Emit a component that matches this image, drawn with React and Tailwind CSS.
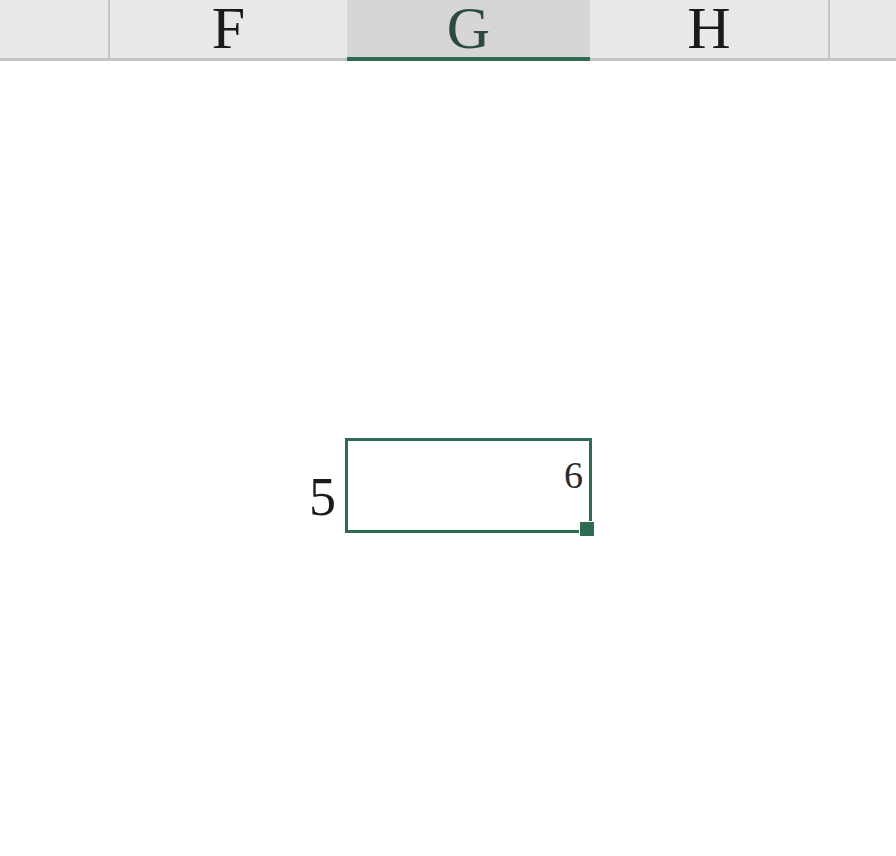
export default function App() {
  const serif = { fontFamily: '"Liberation Serif", "Times New Roman", serif' };
  return (
    <div className="w-[896px] h-[856px] bg-white overflow-hidden" style={serif}>
      <div className="flex h-[61px] text-[60px] leading-[56px] text-[#1a1a1a]">
        <div className="w-[108px] shrink-0 bg-[#e8e8e8] border-b-[3px] border-[#c4c4c4]" />
        <div className="w-[239px] shrink-0 bg-[#e8e8e8] border-l-[2px] border-b-[3px] border-[#c4c4c4] text-center">F</div>
        <div className="w-[243px] shrink-0 bg-[#d6d6d6] border-b-[4px] border-[#2f6b50] text-center text-[#2e4a3e]">G</div>
        <div className="w-[238px] shrink-0 bg-[#e8e8e8] border-b-[3px] border-[#c4c4c4] text-center">H</div>
        <div className="flex-1 bg-[#e8e8e8] border-l-[2px] border-b-[3px] border-[#c4c4c4]" />
      </div>
      <div className="flex pt-[377px]">
        <div className="w-[345px] shrink-0 flex justify-end items-end pr-[9px]">
          <span className="text-[54px] leading-[54px] text-[#1a1a1a] mb-[9px]">5</span>
        </div>
        <div className="relative w-[247px] h-[95px] border-[3px] border-[#2f6b50] flex justify-end items-start pr-[6px] pt-[15px]">
          <span className="text-[38px] leading-[38px] text-[#2a2a2a]">6</span>
          <div className="absolute -right-[6px] -bottom-[7px] w-[16px] h-[16px] bg-[#2f6b50] border border-white" />
        </div>
      </div>
    </div>
  );
}
